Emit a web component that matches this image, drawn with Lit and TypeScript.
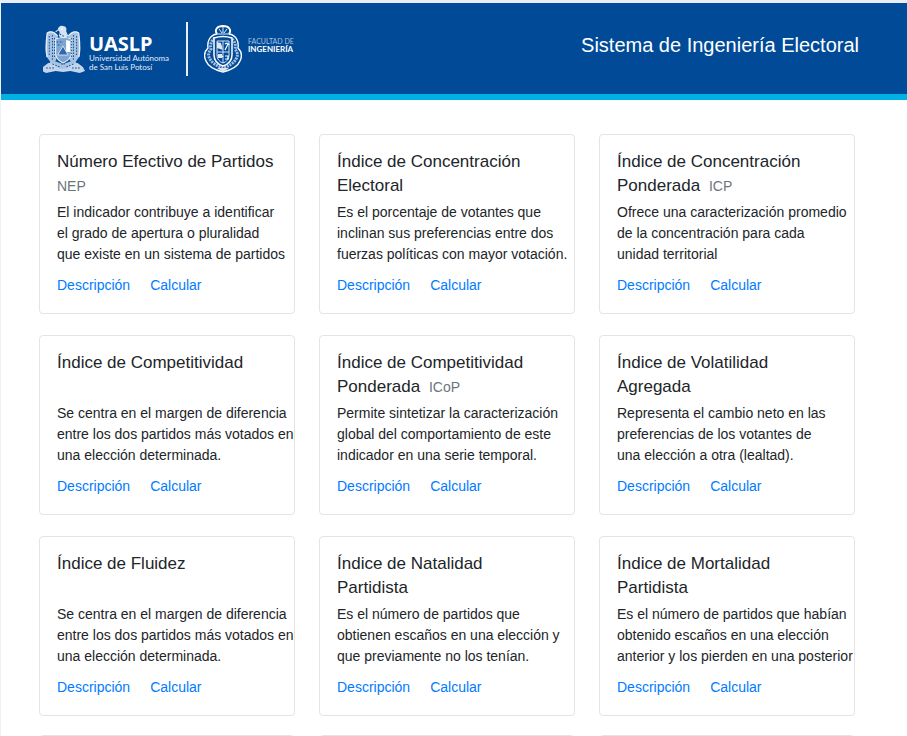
import { LitElement, html, css, svg } from "lit";
import { customElement, property } from "lit/decorators.js";

interface Indice {
  title: string[];
  acronym?: string;
  text: string[];
}

const INDICES: Indice[] = [
  {
    title: ["Número Efectivo de Partidos"],
    acronym: "NEP",
    text: ["El indicador contribuye a identificar", "el grado de apertura o pluralidad", "que existe en un sistema de partidos"],
  },
  {
    title: ["Índice de Concentración", "Electoral"],
    text: ["Es el porcentaje de votantes que", "inclinan sus preferencias entre dos", "fuerzas políticas con mayor votación."],
  },
  {
    title: ["Índice de Concentración", "Ponderada"],
    acronym: "ICP",
    text: ["Ofrece una caracterización promedio", "de la concentración para cada", "unidad territorial"],
  },
  {
    title: ["Índice de Competitividad"],
    text: ["Se centra en el margen de diferencia", "entre los dos partidos más votados en", "una elección determinada."],
  },
  {
    title: ["Índice de Competitividad", "Ponderada"],
    acronym: "ICoP",
    text: ["Permite sintetizar la caracterización", "global del comportamiento de este", "indicador en una serie temporal."],
  },
  {
    title: ["Índice de Volatilidad", "Agregada"],
    text: ["Representa el cambio neto en las", "preferencias de los votantes de", "una elección a otra (lealtad)."],
  },
  {
    title: ["Índice de Fluidez"],
    text: ["Se centra en el margen de diferencia", "entre los dos partidos más votados en", "una elección determinada."],
  },
  {
    title: ["Índice de Natalidad", "Partidista"],
    text: ["Es el número de partidos que", "obtienen escaños en una elección y", "que previamente no los tenían."],
  },
  {
    title: ["Índice de Mortalidad", "Partidista"],
    text: ["Es el número de partidos que habían", "obtenido escaños en una elección", "anterior y los pierden en una posterior"],
  },
];

const lines = (parts: string[]) => parts.map((p, i) => (i ? html`<br />${p}` : p));

@customElement("indice-card")
export class IndiceCard extends LitElement {
  @property({ attribute: false }) indice?: Indice;

  static styles = css`
    :host {
      display: block;
      box-sizing: border-box;
      min-width: 0;
      min-height: 180px;
      padding: 15px 0 15px 17px;
      border: 1px solid #e4e4e4;
      border-radius: 4px;
      background: #fff;
      color: #212529;
    }
    .title {
      margin: 0;
      min-height: 48px;
      font-size: 17px;
      line-height: 24px;
      font-weight: 400;
    }
    .acronym {
      font-size: 14px;
      color: #6c757d;
    }
    .spaced {
      margin-left: 4px;
    }
    .text {
      margin: 4px 0 10px;
      font-size: 14px;
      line-height: 21px;
      white-space: nowrap;
    }
    .links {
      display: flex;
      gap: 20px;
      font-size: 14px;
      line-height: 21px;
    }
    .link {
      color: #007bff;
      text-decoration: none;
    }
    .link:hover {
      text-decoration: underline;
    }
  `;

  render() {
    const d = this.indice;
    if (!d) return html``;
    const ownLine = d.title.length === 1;
    return html`
      <h2 class="title">
        ${lines(d.title)}${d.acronym
          ? html`${ownLine ? html`<br />` : " "}<small class="acronym ${ownLine ? "" : "spaced"}">${d.acronym}</small>`
          : ""}
      </h2>
      <p class="text">${lines(d.text)}</p>
      <nav class="links">
        <a class="link" href="#descripcion">Descripción</a>
        <a class="link" href="#calcular">Calcular</a>
      </nav>
    `;
  }
}

const eagle = svg`
  <g fill="#a9c3e2">
    <path d="M14 6c0-3 3-5 5-4 3 0 4 3 3 5l2 5-4 4-5-4 1-4z" fill="#d5e2f1"/>
    <path d="M14 12C11 8 7 6 4 9c-1 8-2 15-1 23l4 6 5-1 3-8z"/>
    <path d="M24 12c3-4 7-6 10-3 1 8 2 15 1 23l-4 6-5-1-3-8z"/>
    <path d="M8 36l11 4 11-4 3 5-6 6-8-2-8 2-6-6z"/>
    <path d="M0 43l5-4 6 1 3 4 5 1 5-1 3-4 6-1 5 4 2 4-5 2-9-2-7 1-7-1-9 2-4-2z" fill="#c3d5ea"/>
  </g>
  <g fill="none" stroke="#e8f0f8" stroke-width="1.2">
    <path d="M14 12C10 7 7 7 4 9c-1 9-2 16 0 24M24 12c4-5 7-5 10-3 1 9 2 16 0 24"/>
    <path d="M12 15q8-3 15 0v15q-1 6-8 9-6-3-7-9z" fill="#7ea4d1"/>
  </g>
  <path d="M22 16l4 1v11h-4z" fill="#fff"/>
  <path d="M14 31l5-9 5 9z" fill="#2f6aae" stroke="#e8f0f8" stroke-width=".8"/>
  <g fill="none" stroke="#14579f" stroke-width="1" stroke-dasharray="1.6 1.3">
    <path d="M6 12v20M9 11v25M32 12v20M29 11v25"/>
    <path d="M11 14v20M27 14v20M13 18h6M14 21h3M13 36l6 5 6-5"/>
    <path d="M3 44h8M35 44h-8M9 40l7 3M29 40l-7 3M16 10l5 3"/>
  </g>
  <path d="M17 5h2M14 6l-2 2" stroke="#fff" fill="none"/>
`;

const crest = svg`
  <g fill="none" stroke="#fff">
    <path d="M13 9C10 5 13 1 19 1s9 4 6 8" stroke-width="1.8"/>
    <path d="M19 1v7M15 4l3 4M23 4l-3 4M13 9h12" stroke-width=".9"/>
    <path d="M13 9C6 10 3 16 4 23c-4 4-4 9-2 13 2 5 9 9 17 11 8-2 15-6 17-11 2-4 2-9-2-13 1-7-2-13-9-14" stroke-width="1.4"/>
    <path d="M11 13c-4 3-5 7-4 11-3 4-3 7-1 10 2 4 7 7 13 9 6-2 11-5 13-9 2-3 2-6-1-10 1-4 0-8-4-11" stroke="#a4c0e1" stroke-width="3" stroke-dasharray="2 .9"/>
    <path d="M10 13q9-3 18 0v17q0 8-9 11-9-3-9-11z" fill="#004a98" stroke-width="1.5"/>
    <path d="M13 16h12v14q0 6-6 8-6-2-6-8z" stroke="#d3e0f0" stroke-width="1"/>
    <path d="M19 16v22M13 27h12" stroke="#d3e0f0" stroke-width="1"/>
    <path d="M21 25l3-6M21 19q3-2 4 1M14 30q2 4 5 1M21 31h3v3h-3" stroke-width="1.2"/>
  </g>
  <path d="M13 17l4 1 2 7-6-2zM14 29h4v4h-4z" fill="#dbe7f4"/>
  <path d="M13 43h12l-6 4z" fill="#dbe7f4"/>
`;

@customElement("app-root")
export class AppRoot extends LitElement {
  static styles = css`
    :host {
      display: block;
      height: 100vh;
      overflow: hidden;
      box-sizing: border-box;
      border-top: 3px solid #ebedf6;
      border-left: 1px solid #f0f1f8;
      background: #fff;
      font-family: "Liberation Sans", Arial, sans-serif;
    }
    .header {
      display: flex;
      align-items: center;
      justify-content: space-between;
      height: 91px;
      padding: 0 48px 0 42px;
      background: #004a98;
      border-bottom: 6px solid #00b1e3;
      color: #fff;
    }
    .brand {
      display: flex;
      align-items: center;
      font-family: Lato, sans-serif;
    }
    .eagle {
      width: 42px;
      height: 50px;
      margin-right: 4px;
    }
    .crest {
      width: 38px;
      height: 48px;
      margin: 0 6px 0 16px;
    }
    .name {
      font-family: "Noto Sans", sans-serif;
      font-size: 20px;
      line-height: 20px;
      font-weight: 700;
    }
    .sub {
      font-size: 8px;
      line-height: 9px;
    }
    .university {
      width: 97px;
      padding-top: 8px;
      color: #e3edf7;
    }
    .name,
    .strong {
      color: #fff;
    }
    .divider {
      width: 2px;
      height: 54px;
      background: #e9f0f8;
    }
    .faculty {
      padding-bottom: 8px;
      font-size: 7px;
      line-height: 8px;
      color: #a9c2df;
    }
    .strong {
      font-size: 8px;
      font-weight: 700;
    }
    .app-title {
      margin: 0;
      padding-bottom: 8px;
      font-size: 20px;
      line-height: 24px;
      font-weight: 400;
    }
    .grid {
      display: grid;
      grid-template-columns: repeat(3, 1fr);
      gap: 21px 24px;
      padding: 34px 52px 0 38px;
    }
    .next {
      padding-top: 19px;
    }
  `;

  render() {
    return html`
      <header class="header">
        <div class="brand">
          <svg class="eagle" viewBox="0 0 40 50" preserveAspectRatio="none" aria-hidden="true">${eagle}</svg>
          <div class="university">
            <div class="name">UASLP</div>
            <div class="sub">Universidad Autónoma<br />de San Luis Potosí</div>
          </div>
          <div class="divider"></div>
          <svg class="crest" viewBox="0 0 38 48" aria-hidden="true">${crest}</svg>
          <div class="faculty">FACULTAD DE<br /><span class="strong">INGENIERÍA</span></div>
        </div>
        <h1 class="app-title">Sistema de Ingeniería Electoral</h1>
      </header>
      <main>
        <div class="grid">${INDICES.map((d) => html`<indice-card .indice=${d}></indice-card>`)}</div>
        <div class="grid next">${[0, 1, 2].map(() => html`<indice-card></indice-card>`)}</div>
      </main>
    `;
  }
}
